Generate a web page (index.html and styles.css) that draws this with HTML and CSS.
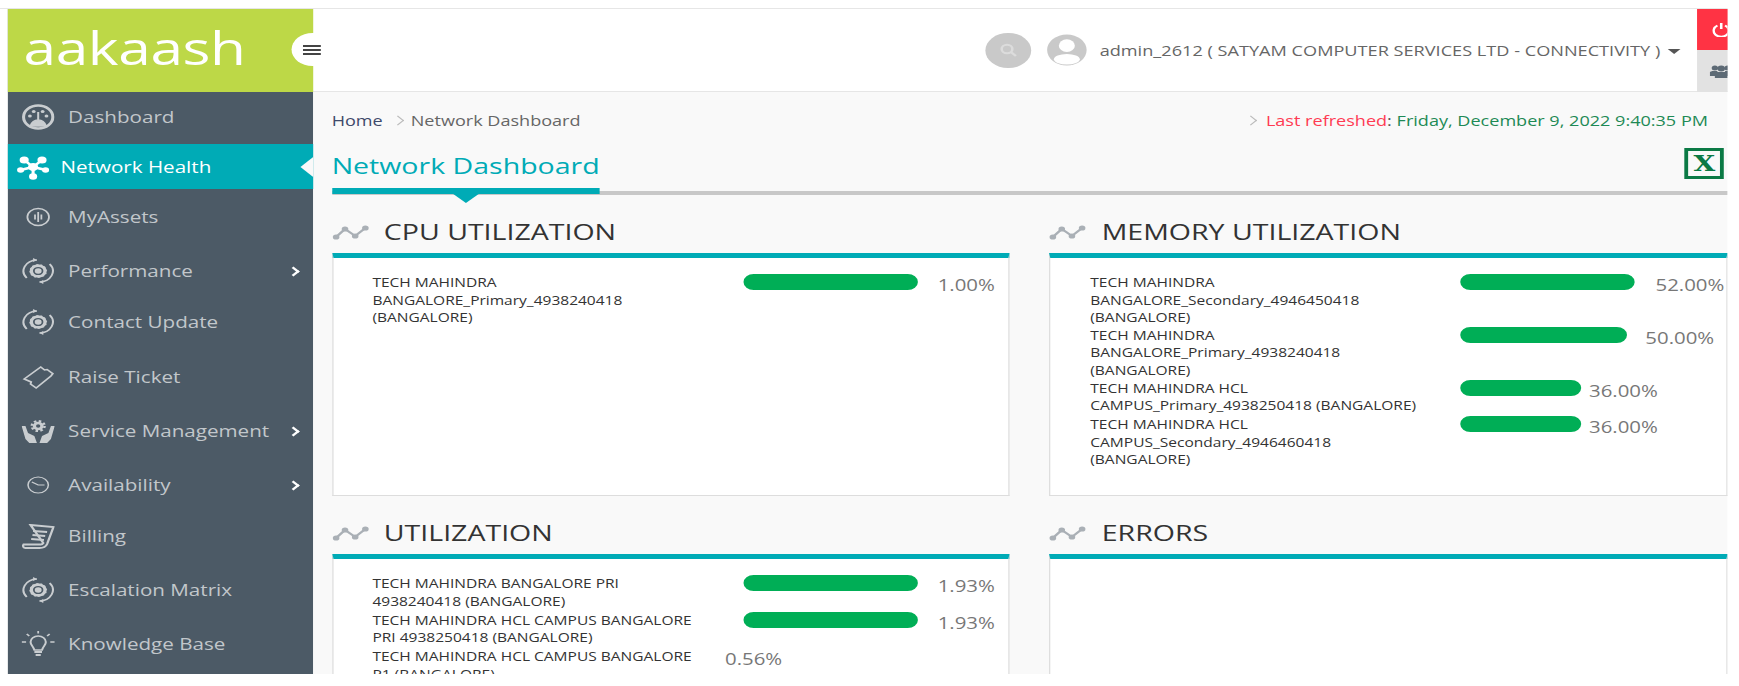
FILE: index.html
```html
<!DOCTYPE html>
<html>
  <head>
    <title>Network Dashboard</title>
    <link rel="stylesheet" href="styles.css">
  </head>
  <body>
    <svg class="defs" width="0" height="0">
      <symbol id="i-cycle" viewBox="0 0 26 26">
        <path d="M4 20A11 11 0 0 1 12 2M22 6A11 11 0 0 1 14 24" fill="none" stroke="currentColor" stroke-width="1.6"/>
        <path d="M12 2l-3-2v4zM14 24l3 2v-4z" fill="currentColor"/>
        <circle cx="13" cy="13" r="7" fill="currentColor"/>
        <circle cx="13" cy="13" r="7.500" fill="none" stroke="#4C5A66" stroke-width="1.600" stroke-dasharray="2 1.900"/>
        <circle cx="13" cy="13" r="3.400" fill="none" stroke="#4C5A66" stroke-width="1.400"/>
      </symbol>
      <symbol id="i-trend" viewBox="0 0 29 15">
        <path d="M3 12L10 4L18 11L26 3" fill="none" stroke="currentColor" stroke-width="2"/>
        <circle cx="3" cy="12" r="2.6" fill="currentColor"/>
        <circle cx="10" cy="4" r="2.6" fill="currentColor"/>
        <circle cx="18" cy="11" r="2.6" fill="currentColor"/>
        <circle cx="26" cy="3" r="2.6" fill="currentColor"/>
      </symbol>
    </svg>

    <div class="stage">
      <div class="top-line"></div>
      <div class="app">
        <aside class="sidebar">
          <div class="logo">
            <span class="logo-text">aakaash</span>
            <span class="toggle"><i></i><i></i><i></i></span>
          </div>
          <nav class="nav">
            <a class="nav-item first">
              <svg class="nav-icon" viewBox="0 0 26 26"><circle cx="13" cy="13" r="11.5" fill="none" stroke="currentColor" stroke-width="2.4"/><circle cx="6.5" cy="12" r="1.5" fill="currentColor"/><circle cx="9.5" cy="7.5" r="1.5" fill="currentColor"/><circle cx="16.5" cy="7.5" r="1.5" fill="currentColor"/><circle cx="19.5" cy="12" r="1.5" fill="currentColor"/><path d="M13 8v8M7 22c1-4 3-6 6-6s5 2 6 6z" fill="currentColor" stroke="currentColor" stroke-width="1.6"/></svg>
              <span>Dashboard</span>
            </a>
            <a class="nav-item active">
              <svg class="nav-icon" viewBox="0 0 26 26"><path d="M13 13L5 5M13 13L21 5M13 13L3 16M13 13L23 16M13 13V22" stroke="currentColor" stroke-width="2.4"/><circle cx="13" cy="13" r="4" fill="currentColor"/><circle cx="6" cy="6" r="3.6" fill="currentColor"/><circle cx="20" cy="6" r="3.6" fill="currentColor"/><circle cx="3.2" cy="16" r="2.8" fill="currentColor"/><circle cx="22.8" cy="16" r="2.8" fill="currentColor"/><circle cx="13" cy="22.5" r="3.2" fill="currentColor"/></svg>
              <span>Network Health</span>
            </a>
            <a class="nav-item assets">
              <svg class="nav-icon" viewBox="0 0 26 26"><circle cx="13" cy="13" r="8.5" fill="none" stroke="currentColor" stroke-width="1.4"/><path d="M13 8v10M10.5 10.5v5M15.5 10.5v5" stroke="currentColor" stroke-width="1.4"/></svg>
              <span>MyAssets</span>
            </a>
            <a class="nav-item">
              <svg class="nav-icon"><use href="#i-cycle"/></svg>
              <span>Performance</span>
              <b class="chevron"></b>
            </a>
            <a class="nav-item contact">
              <svg class="nav-icon"><use href="#i-cycle"/></svg>
              <span>Contact Update</span>
            </a>
            <a class="nav-item ticket">
              <svg class="nav-icon" viewBox="0 0 26 26"><path d="M2 15L15 3L18 6L20 5.500L24.500 9.700L23 12L11.400 24L7 20L7.500 18Z" fill="none" stroke="currentColor" stroke-width="1.500"/></svg>
              <span>Raise Ticket</span>
            </a>
            <a class="nav-item">
              <svg class="nav-icon" viewBox="0 0 26 26"><circle cx="13" cy="8" r="3" fill="none" stroke="currentColor" stroke-width="2.600"/><circle cx="13" cy="8" r="5" fill="none" stroke="currentColor" stroke-width="2" stroke-dasharray="2 1.900"/><path d="M0 8l3 0 2 7 5 3 2 7H6l-3-4zM26 8l-3 0-2 7-5 3-2 7h6l3-4z" fill="currentColor"/></svg>
              <span>Service Management</span>
              <b class="chevron"></b>
            </a>
            <a class="nav-item">
              <svg class="nav-icon" viewBox="0 0 26 26"><ellipse cx="13" cy="13" rx="8" ry="8" fill="none" stroke="currentColor" stroke-width="1.200"/><path d="M8 10l5 3h5" fill="none" stroke="currentColor" stroke-width="1.200"/></svg>
              <span>Availability</span>
              <b class="chevron"></b>
            </a>
            <a class="nav-item billing">
              <svg class="nav-icon" viewBox="0 0 26 26"><path d="M7 2L25 4L20 21C19 24 17 25 14 25H3C1.500 25 0.500 23 1.500 21.500H15C16 21.500 16.500 21 17 20Z" fill="none" stroke="currentColor" stroke-width="1.800"/><path d="M9 8l11 1M8.500 12l10 1M7.500 16l10 1" stroke="currentColor" stroke-width="1.800"/></svg>
              <span>Billing</span>
            </a>
            <a class="nav-item">
              <svg class="nav-icon"><use href="#i-cycle"/></svg>
              <span>Escalation Matrix</span>
            </a>
            <a class="nav-item">
              <svg class="nav-icon" viewBox="0 0 26 26"><path d="M10 19C9 15 7 14 7 11a6 6 0 0 1 12 0c0 3-2 4-3 8z" fill="none" stroke="currentColor" stroke-width="1.600"/><path d="M10 21h6M11 24h4" stroke="currentColor" stroke-width="2.200"/><path d="M13 0v2.500M4 3l2 2M22 3l-2 2M0 11h3.500M26 11h-3.500" stroke="currentColor" stroke-width="1.400"/></svg>
              <span>Knowledge Base</span>
            </a>
          </nav>
        </aside>

        <main class="main">
          <header class="topbar">
            <span class="search">
              <svg width="14" height="14" viewBox="0 0 14 14"><circle cx="6" cy="6" r="4.200" fill="none" stroke="#dcdcdc" stroke-width="2"/><path d="M9 9l4 4" stroke="#dcdcdc" stroke-width="2"/></svg>
            </span>
            <svg class="avatar" viewBox="0 0 33 33"><circle cx="16.500" cy="16.500" r="16" fill="#c9c9c9"/><circle cx="16.500" cy="12" r="6.500" fill="#fff"/><ellipse cx="16.500" cy="26" rx="10.500" ry="5.500" fill="#fff"/></svg>
            <span class="user">admin_2612 ( SATYAM COMPUTER SERVICES LTD - CONNECTIVITY )</span>
            <span class="caret"></span>
            <div class="side-btns">
              <span class="btn-power">
                <svg width="14" height="15" viewBox="0 0 14 15"><path d="M4 3.500A6 6 0 1 0 10 3.500" fill="none" stroke="#fff" stroke-width="2"/><path d="M7 1v6" stroke="#fff" stroke-width="2"/></svg>
              </span>
              <span class="btn-group">
                <svg width="18" height="14" viewBox="0 0 18 14"><circle cx="4" cy="4" r="2.500" fill="#5d6a75"/><circle cx="14" cy="4" r="2.500" fill="#5d6a75"/><circle cx="9" cy="4.500" r="3" fill="#5d6a75"/><path d="M0 12V8l2-1h4v5zM12 7h4l2 1v4h-6zM4 14V9l2-1h6l2 1v5z" fill="#5d6a75"/></svg>
              </span>
            </div>
          </header>

          <div class="content">
            <div class="crumbs">
              <span class="home">Home</span>
              <span class="crumb-sep"></span>
              <span>Network Dashboard</span>
              <span class="crumb-sep refresh-sep"></span>
              <span class="refreshed"><em>Last refreshed</em>: <strong>Friday, December 9, 2022 9:40:35 PM</strong></span>
            </div>

            <div class="title-bar">
              <h1 class="title">Network Dashboard</h1>
              <span class="excel">X</span>
            </div>

            <div class="grid">
              <section>
                <h2 class="sec-head"><svg class="sec-icon"><use href="#i-trend"/></svg>CPU UTILIZATION</h2>
                <div class="panel">
                  <div class="row">
                    <div class="name">TECH MAHINDRA BANGALORE_Primary_4938240418 (BANGALORE)</div>
                    <div class="meter"><span class="bar" style="width: 137px"></span><span class="val">1.00%</span></div>
                  </div>
                </div>
              </section>

              <section>
                <h2 class="sec-head"><svg class="sec-icon"><use href="#i-trend"/></svg>MEMORY UTILIZATION</h2>
                <div class="panel">
                  <div class="row">
                    <div class="name">TECH MAHINDRA BANGALORE_Secondary_4946450418 (BANGALORE)</div>
                    <div class="meter"><span class="bar" style="width: 137px"></span><span class="val">52.00%</span></div>
                  </div>
                  <div class="row">
                    <div class="name">TECH MAHINDRA BANGALORE_Primary_4938240418 (BANGALORE)</div>
                    <div class="meter"><span class="bar" style="width: 131px"></span><span class="val near">50.00%</span></div>
                  </div>
                  <div class="row">
                    <div class="name">TECH MAHINDRA HCL CAMPUS_Primary_4938250418 (BANGALORE)</div>
                    <div class="meter"><span class="bar" style="width: 94.5px"></span><span class="val tight">36.00%</span></div>
                  </div>
                  <div class="row">
                    <div class="name">TECH MAHINDRA HCL CAMPUS_Secondary_4946460418 (BANGALORE)</div>
                    <div class="meter"><span class="bar" style="width: 94.5px"></span><span class="val tight">36.00%</span></div>
                  </div>
                </div>
              </section>

              <section>
                <h2 class="sec-head"><svg class="sec-icon"><use href="#i-trend"/></svg>UTILIZATION</h2>
                <div class="panel">
                  <div class="row">
                    <div class="name">TECH MAHINDRA BANGALORE PRI 4938240418 (BANGALORE)</div>
                    <div class="meter"><span class="bar" style="width: 137px"></span><span class="val">1.93%</span></div>
                  </div>
                  <div class="row">
                    <div class="name">TECH MAHINDRA HCL CAMPUS BANGALORE PRI 4938250418 (BANGALORE)</div>
                    <div class="meter"><span class="bar" style="width: 137px"></span><span class="val">1.93%</span></div>
                  </div>
                  <div class="row">
                    <div class="name">TECH MAHINDRA HCL CAMPUS BANGALORE P1 (BANGALORE)</div>
                    <div class="meter"><span class="val empty">0.56%</span></div>
                  </div>
                </div>
              </section>

              <section>
                <h2 class="sec-head"><svg class="sec-icon"><use href="#i-trend"/></svg>ERRORS</h2>
                <div class="panel"></div>
              </section>
            </div>
          </div>
        </main>
      </div>
    </div>
  </body>
</html>
```

FILE: styles.css
```css
* {
  box-sizing: border-box;
}
html, body {
  margin: 0;
  height: 686px;
  overflow: hidden;
  background-color: #FFF;
}
body {
  font-family: "Open Sans", "Liberation Sans", sans-serif;
  color: #333;
}
.defs {
  display: block;
  height: 0;
}
/* the whole capture is a 1366 wide page stretched sideways */
.stage {
  width: 1366px;
  height: 686px;
  overflow: hidden;
  transform-origin: 0 0;
  transform: scaleX(1.2731);
}
.top-line {
  width: 1357.3px;
  height: 1px;
  margin-top: 8px;
  background-color: #E6E6E6;
}
.app {
  display: flex;
  width: 1351.8px;
  height: 665px;
  margin-left: 5.5px;
  overflow: hidden;
}

/* sidebar */
.sidebar {
  flex: 0 0 240px;
  background-color: #4C5A66;
}
.logo {
  position: relative;
  height: 83px;
  padding: 8px 0 0 13px;
  background-color: #BDD847;
}
.logo-text {
  font-size: 46px;
  line-height: 60px;
  letter-spacing: -0.3px;
  color: #FFF;
}
.toggle {
  position: absolute;
  z-index: 2;
  top: 24px;
  left: 223px;
  width: 34px;
  height: 33px;
  padding: 12px 11px 0 9px;
  border-radius: 17px;
  background-color: #FFF;
}
.toggle i {
  display: block;
  height: 2px;
  margin-bottom: 2px;
  background-color: #444;
}
.nav-item {
  position: relative;
  display: flex;
  align-items: center;
  gap: 11px;
  height: 54px;
  padding-left: 11px;
  font-size: 16.2px;
  color: #C2C7CB;
}
.nav-icon {
  flex: 0 0 26px;
  width: 26px;
  height: 26px;
  color: #C9CDD0;
}
.nav-item.first {
  height: 52px;
  padding-bottom: 2px;
}
.nav-item.active {
  height: 45px;
  gap: 9px;
  padding-left: 7px;
  background-color: #00ABB6;
  color: #FFF;
}
.nav-item.active .nav-icon {
  color: #FFF;
}
.nav-item.active::after {
  content: "";
  position: absolute;
  right: 0;
  top: 13px;
  border: 10px solid transparent;
  border-left: 0;
  border-right-color: #F9F9F9;
}
.nav-item.assets {
  margin-top: 1px;
}
.nav-item.contact {
  margin-top: -3px;
}
.nav-item.ticket {
  margin-top: 1px;
}
.nav-item.billing {
  margin-top: -3px;
}
.chevron {
  position: absolute;
  left: 221.5px;
  top: 24px;
  width: 7px;
  height: 7px;
  border-top: 2px solid #FFF;
  border-right: 2px solid #FFF;
  transform: rotate(45deg);
}

/* top bar */
.main {
  flex: 1;
  min-width: 0;
  background-color: #F9F9F9;
}
.topbar {
  display: flex;
  align-items: center;
  justify-content: flex-end;
  height: 83px;
  background-color: #FFF;
  border-bottom: 1px solid #E6E6E6;
}
.search {
  display: flex;
  align-items: center;
  justify-content: center;
  width: 35.5px;
  height: 35px;
  margin-right: 11.8px;
  border-radius: 50%;
  background-color: #C9C9C9;
}
.avatar {
  width: 32px;
  height: 32px;
  margin-right: 10px;
}
.user {
  font-size: 14.25px;
  color: #666;
}
.caret {
  margin: 3px 12.6px 0 6.3px;
  border-style: solid;
  border-width: 5px 5.5px 0;
  border-color: #555 transparent transparent;
}
.side-btns {
  flex: 0 0 38px;
  align-self: stretch;
  margin-right: -13.7px;
}
.btn-power, .btn-group {
  display: flex;
  align-items: center;
  justify-content: center;
}
.btn-power {
  height: 41px;
  background-color: #FF3344;
}
.btn-group {
  height: 42px;
  background-color: #E2E2E2;
}

/* content */
.content {
  padding-left: 15px;
}
.crumbs {
  display: flex;
  align-items: center;
  height: 57px;
  font-size: 14.2px;
  color: #666;
}
.home {
  color: #3F4A6B;
}
.crumb-sep {
  width: 7px;
  height: 7px;
  margin: 0 7px 0 8px;
  border-top: 1px solid #BBB;
  border-right: 1px solid #BBB;
  transform: rotate(45deg);
}
.refresh-sep {
  margin-left: auto;
  margin-right: 8.5px;
}
.refreshed {
  margin-right: 15.7px;
  color: #555;
}
.refreshed em {
  font-style: normal;
  color: #FF3B53;
}
.refreshed strong {
  font-weight: normal;
  color: #1E8A55;
}
.title-bar {
  display: flex;
  justify-content: space-between;
  border-bottom: 4px solid #C8C8C8;
}
.title {
  position: relative;
  margin: 0 0 -3px;
  padding: 1px 0 6px;
  font-size: 22.4px;
  line-height: 32px;
  font-weight: normal;
  color: #00ABB6;
  border-bottom: 6px solid #00ABB6;
}
.title::after {
  content: "";
  position: absolute;
  left: 50%;
  bottom: -15px;
  margin-left: -10px;
  border-style: solid;
  border-width: 9px 10px 0;
  border-color: #00ABB6 transparent transparent;
}
.excel {
  width: 31px;
  height: 31px;
  margin: -1px 3px 0 0;
  border: 3px solid #0B7A45;
  font-family: "DejaVu Serif", serif;
  font-size: 22px;
  line-height: 24px;
  font-weight: bold;
  text-align: center;
  color: #0B7A45;
}
.grid {
  display: grid;
  grid-template-columns: 1fr 1fr;
  column-gap: 31px;
}
.sec-head {
  display: flex;
  align-items: center;
  gap: 12px;
  margin: 0;
  padding: 21px 0 5px;
  font-size: 22.4px;
  line-height: 32px;
  font-weight: normal;
  color: #333;
}
.sec-icon {
  width: 29px;
  height: 15px;
  color: #AAB0B6;
}
.panel {
  height: 243px;
  padding: 16px 0 0 31px;
  background-color: #FFF;
  border: 1px solid #DDD;
  border-top: 5px solid #00ABB6;
}
.row {
  display: flex;
  min-height: 36.5px;
}
.name {
  flex: 0 0 291px;
  padding-right: 26px;
  font-size: 12.2px;
  line-height: 17.6px;
  color: #333;
}
.meter {
  display: flex;
  align-items: flex-start;
}
.bar {
  height: 16px;
  border-radius: 8px;
  background-color: #00AE56;
}
.val {
  margin-left: 16px;
  font-size: 16px;
  line-height: 22px;
  color: #777;
}
.val.near {
  margin-left: 14px;
}
.val.tight {
  margin-left: 6.3px;
}
.val.empty {
  margin-left: -14px;
}
```
